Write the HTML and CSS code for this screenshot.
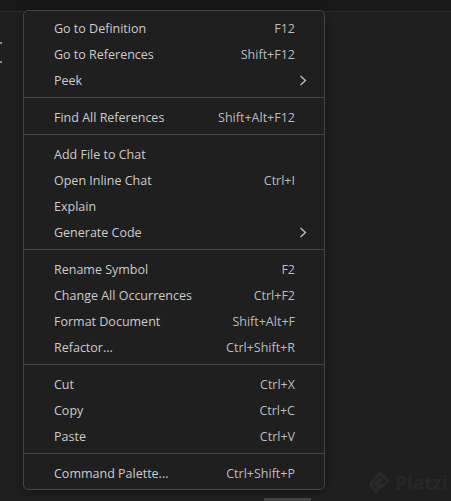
FILE: index.html
```html
<!DOCTYPE html>
<html>
<head>
<meta charset="utf-8">
<link rel="stylesheet" href="styles.css">
</head>
<body>
<div class="tabs"></div>
<div class="editor">
  <span class="mark mark-a"></span>
  <span class="mark mark-b"></span>
  <div class="scroll-thumb"></div>
  <div class="watermark">
    <svg class="wm-logo" width="24" height="26" viewBox="0 0 24 26"><path d="M12 3 L20 11 L14 17 L10 13 L13 10 L12 9 L7 14 L11 18 L8 21 L3 16 L4 12 Z" fill="none" stroke="#272a26" stroke-width="3" stroke-linejoin="round"/></svg>
    <span class="wm-text">Platzi</span>
  </div>
  <div class="menu">
    <div class="row"><span class="label">Go to Definition</span><span class="key">F12</span></div>
    <div class="row"><span class="label">Go to References</span><span class="key">Shift+F12</span></div>
    <div class="row"><span class="label">Peek</span><svg class="chev" width="8" height="11" viewBox="0 0 8 11"><polyline points="1.5,1 6.5,5.5 1.5,10" fill="none" stroke="#c8c8c8" stroke-width="1.2"/></svg></div>
    <div class="sep"></div>
    <div class="row"><span class="label">Find All References</span><span class="key">Shift+Alt+F12</span></div>
    <div class="sep"></div>
    <div class="row"><span class="label">Add File to Chat</span></div>
    <div class="row"><span class="label">Open Inline Chat</span><span class="key">Ctrl+I</span></div>
    <div class="row"><span class="label">Explain</span></div>
    <div class="row"><span class="label">Generate Code</span><svg class="chev" width="8" height="11" viewBox="0 0 8 11"><polyline points="1.5,1 6.5,5.5 1.5,10" fill="none" stroke="#c8c8c8" stroke-width="1.2"/></svg></div>
    <div class="sep"></div>
    <div class="row"><span class="label">Rename Symbol</span><span class="key">F2</span></div>
    <div class="row"><span class="label">Change All Occurrences</span><span class="key">Ctrl+F2</span></div>
    <div class="row"><span class="label">Format Document</span><span class="key">Shift+Alt+F</span></div>
    <div class="row"><span class="label">Refactor...</span><span class="key">Ctrl+Shift+R</span></div>
    <div class="sep"></div>
    <div class="row"><span class="label">Cut</span><span class="key">Ctrl+X</span></div>
    <div class="row"><span class="label">Copy</span><span class="key">Ctrl+C</span></div>
    <div class="row"><span class="label">Paste</span><span class="key">Ctrl+V</span></div>
    <div class="sep"></div>
    <div class="row"><span class="label">Command Palette...</span><span class="key">Ctrl+Shift+P</span></div>
  </div>
</div>
</body>
</html>
```
FILE: styles.css
```css
html, body {
  margin: 0;
  padding: 0;
  width: 451px;
  height: 501px;
  overflow: hidden;
  background: #1f1f1f;
  font-family: "Open Sans", "Noto Sans", sans-serif;
}
.tabs {
  height: 11px;
  background: #181818;
  border-bottom: 1px solid #2b2b2b;
}
.editor {
  position: relative;
  height: 489px;
  background: #1f1f1f;
}
.mark {
  position: absolute;
  left: 0;
  width: 2px;
  height: 2px;
  background: #8a8a8a;
}
.mark-a { top: 30px; }
.mark-b { top: 49px; }
.scroll-thumb {
  position: absolute;
  left: 264px;
  top: 486px;
  width: 47px;
  height: 4px;
  background: #444444;
}
.watermark {
  position: absolute;
  left: 368px;
  top: 458px;
  display: flex;
  align-items: center;
  gap: 3px;
}
.wm-text {
  font-size: 19px;
  font-weight: 700;
  line-height: 26px;
  color: #262825;
}
.menu {
  position: absolute;
  left: 23px;
  top: -2px;
  width: 300px;
  box-sizing: content-box;
  padding: 4px 0 3px;
  background: #1f1f1f;
  border: 1px solid #454545;
  border-radius: 5px;
  box-shadow: 0 2px 8px rgba(0, 0, 0, 0.36);
}
.row {
  height: 26px;
  display: flex;
  align-items: center;
  padding: 0 29px 0 30px;
  font-size: 12.5px;
  color: #cccccc;
}
.label {
  flex: 1;
}
.key {
  color: #bcbcbc;
}
.chev {
  margin-right: -12px;
}
.sep {
  margin: 4px 0 6px;
  height: 0;
  border-bottom: 1px solid #454545;
}
```
